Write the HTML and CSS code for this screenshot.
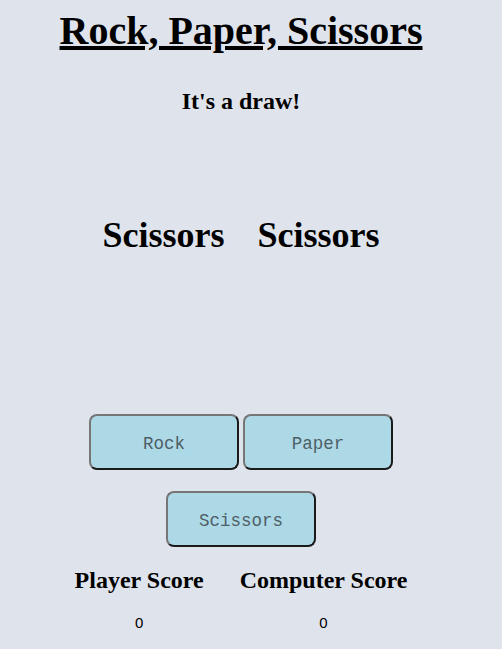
FILE: index.html
```html
<!DOCTYPE html>
<html>
<head>
<meta charset="utf-8">
<link rel="stylesheet" href="styles.css">
</head>
<body>
<main class="app">
  <h1 class="title">Rock, Paper, Scissors</h1>
  <h2 class="result">It's a draw!</h2>
  <div class="choices">
    <h1 class="choice">Scissors</h1>
    <h1 class="choice">Scissors</h1>
  </div>
  <div class="buttons">
    <div class="row">
      <button class="btn">Rock</button>
      <button class="btn">Paper</button>
    </div>
    <div class="row">
      <button class="btn">Scissors</button>
    </div>
  </div>
  <div class="scores">
    <div class="score">
      <h2 class="score-label">Player Score</h2>
      <p class="score-value">0</p>
    </div>
    <div class="score">
      <h2 class="score-label">Computer Score</h2>
      <p class="score-value">0</p>
    </div>
  </div>
</main>
</body>
</html>
```
FILE: styles.css
```css
html, body {
  margin: 0;
  padding: 0;
}
body {
  background: #dfe3ec;
  font-family: "Liberation Serif", "Times New Roman", serif;
  color: #000;
}
.app {
  width: 482px;
  display: flex;
  flex-direction: column;
  align-items: center;
}
.title {
  font-size: 40px;
  font-weight: bold;
  text-decoration: underline;
  margin: 7px 0 0;
  line-height: normal;
}
.result {
  font-size: 24px;
  margin: 34px 0 0;
  line-height: normal;
}
.choices {
  display: flex;
  gap: 33px;
  margin-top: 99px;
}
.choice {
  font-size: 36px;
  margin: 0;
  line-height: normal;
}
.buttons {
  margin-top: 158px;
  display: flex;
  flex-direction: column;
  align-items: center;
  gap: 21px;
}
.row {
  display: flex;
  gap: 4px;
}
.btn {
  width: 150px;
  height: 56px;
  background: #add8e6;
  border: 2px solid;
  border-color: #767676 #1a1a1a #1a1a1a #767676;
  border-radius: 8px;
  font-family: "Liberation Mono", "Courier New", monospace;
  font-size: 17.5px;
  color: #4d6066;
  padding: 3px 0 0;
}
.scores {
  display: flex;
  gap: 36px;
  margin-top: 20px;
}
.score {
  display: flex;
  flex-direction: column;
  align-items: center;
}
.score-label {
  font-size: 24px;
  margin: 0;
  line-height: normal;
}
.score-value {
  font-family: "Liberation Sans", Arial, sans-serif;
  font-size: 15px;
  margin: 20px 0 0;
}
```
